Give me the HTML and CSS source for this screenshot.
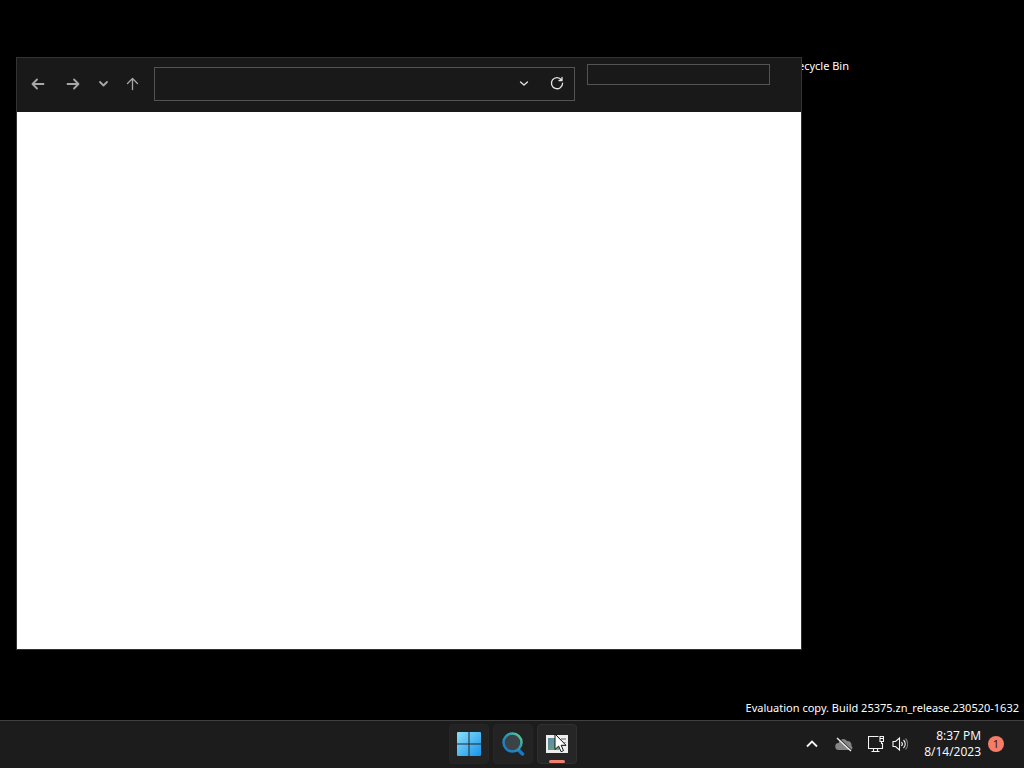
FILE: index.html
```
<!DOCTYPE html>
<html lang="en">
<head>
    <meta charset="UTF-8">
    <meta name="viewport" content="width=device-width, initial-scale=1.0">
    <title>Desktop</title>
    <link rel="stylesheet" href="styles.css">
</head>
<body>
    <main class="desktop">
        <div class="desktop-label">Recycle Bin</div>

        <section class="window">
            <header class="toolbar">
                <nav class="nav">
                    <button class="nav-btn" aria-label="Back">
                        <svg width="16" height="16" viewBox="0 0 16 16"><path d="M13.500 8H2.500M7 3.500L2.500 8 7 12.500"/></svg>
                    </button>
                    <button class="nav-btn" aria-label="Forward">
                        <svg width="16" height="16" viewBox="0 0 16 16"><path d="M2.500 8h11M9 3.500L13.500 8 9 12.500"/></svg>
                    </button>
                    <button class="nav-btn recent" aria-label="Recent locations">
                        <svg width="16" height="16" viewBox="0 0 16 16"><path d="M4 6l3.500 3.500L11 6"/></svg>
                    </button>
                    <button class="nav-btn up" aria-label="Up">
                        <svg width="16" height="16" viewBox="0 0 16 16"><path d="M7.500 13.500V2.500M2.500 7.500l5-5 5 5"/></svg>
                    </button>
                </nav>
                <div class="address">
                    <input type="text" class="address-input" aria-label="Address">
                    <button class="address-btn" aria-label="Previous locations">
                        <svg width="16" height="16" viewBox="0 0 16 16"><path d="M4.500 6L8 9l3.500-3"/></svg>
                    </button>
                    <button class="address-btn refresh" aria-label="Refresh">
                        <svg width="16" height="16" viewBox="0 0 16 16"><path d="M12.500 3.800A5.600 5.600 0 1 0 13.600 7.200M13 1.500v3H10"/></svg>
                    </button>
                </div>
                <input type="text" class="search" aria-label="Search">
            </header>
            <div class="content"></div>
        </section>

        <div class="watermark">Evaluation copy. Build 25375.zn_release.230520-1632</div>
    </main>

    <footer class="taskbar">
        <div class="apps">
            <button class="app" aria-label="Start">
                <svg width="24" height="24" viewBox="0 0 24 24">
                    <defs>
                        <linearGradient id="win" gradientUnits="userSpaceOnUse" x1="0" y1="0" x2="24" y2="24">
                            <stop offset="0" stop-color="#8be0fb"/>
                            <stop offset="1" stop-color="#1593ea"/>
                        </linearGradient>
                    </defs>
                    <path fill="url(#win)" d="M0 1a1 1 0 0 1 1-1h10.500v11.500H0zM12.500 0H23a1 1 0 0 1 1 1v10.500H12.500zM0 12.500h11.500V24H1a1 1 0 0 1-1-1zM12.500 12.500H24V23a1 1 0 0 1-1 1H12.500z"/>
                </svg>
            </button>
            <button class="app" aria-label="Search">
                <svg width="24" height="24" viewBox="0 0 24 24" fill="none">
                    <defs>
                        <linearGradient id="lens" x1="1" y1="0" x2="0" y2="1">
                            <stop offset="0" stop-color="#62d68c"/>
                            <stop offset="0.400" stop-color="#2f9bb0"/>
                            <stop offset="1" stop-color="#1473cc"/>
                        </linearGradient>
                    </defs>
                    <path d="M17.500 18l4 4" stroke="#1678cc" stroke-width="3.500" stroke-linecap="round"/>
                    <circle cx="11.500" cy="10.500" r="9" fill="#3b4346" stroke="url(#lens)" stroke-width="2.500"/>
                </svg>
            </button>
            <button class="app active" aria-label="Explorer window">
                <svg width="22" height="18" viewBox="0 0 22 18">
                    <defs>
                        <linearGradient id="pane" x1="0" y1="0" x2="1" y2="1">
                            <stop offset="0" stop-color="#5d86a0"/>
                            <stop offset="1" stop-color="#68a981"/>
                        </linearGradient>
                    </defs>
                    <path fill="#eeeeee" d="M0 0h22v18H0z"/>
                    <path fill="url(#pane)" d="M2 3h11v12H2z"/>
                    <path fill="#a4a4a4" d="M15 3h5v2h-5zM15 7h5v1h-5zM15 10h5v1h-5z"/>
                </svg>
                <!-- mouse pointer -->
                <svg class="cursor" width="13" height="20" viewBox="0 0 13 20">
                    <path d="M1 1v15.500l3.600-3.400 2.500 5.600 2.400-1.100-2.400-5.300H12z" fill="#ffffff" stroke="#111111"/>
                </svg>
            </button>
        </div>

        <div class="tray">
            <button class="tray-btn" aria-label="Show hidden icons">
                <svg width="16" height="16" viewBox="0 0 16 16"><path d="M3 10.500l5-5 5 5" stroke-width="1.800"/></svg>
            </button>
            <button class="tray-btn" aria-label="OneDrive">
                <svg width="18" height="16" viewBox="0 0 18 16">
                    <path d="M4 14a3.500 3.500 0 0 1-.5-7A4.800 4.800 0 0 1 12 5a4.200 4.200 0 0 1 4.500 5 2.200 2.200 0 0 1-1 4z" fill="#858585" stroke="none"/>
                    <path d="M2.600 1.400l14 13" stroke="#1c1c1c" stroke-width="1.200"/>
                    <path d="M2 2l14 13" stroke="#eeeeee" stroke-width="1.400"/>
                </svg>
            </button>
            <button class="tray-btn status" aria-label="Network and volume">
                <svg width="16" height="16" viewBox="0 0 16 16">
                    <path d="M10.500 .5H.5v12h14V7M5.500 12.500v3M9.500 12.500v3M3.500 15.500h8M12 .5h3.500v5H12zM12 2.500h3.500M13.500 5.500V8"/>
                </svg>
                <svg width="16" height="16" viewBox="0 0 16 16">
                    <path d="M1 5.500h2.500L7.500 2v12l-4-3.500H1z"/>
                    <path d="M9.500 6a3 3 0 0 1 0 4M11.500 4a5.500 5.500 0 0 1 0 8"/>
                    <path d="M13.500 2.500a8 8 0 0 1 0 11" stroke="#777777"/>
                </svg>
            </button>
            <button class="tray-btn clock">
                <span>8:37 PM</span>
                <span>8/14/2023</span>
            </button>
            <button class="badge" aria-label="1 notification">1</button>
        </div>
    </footer>
</body>
</html>
```
FILE: styles.css
```
* {
    box-sizing: border-box;
}

body {
    margin: 0;
    height: 100vh;
    display: flex;
    flex-direction: column;
    overflow: hidden;
    background: #000000;
    color: #ffffff;
    font-family: "Noto Sans", "Open Sans", sans-serif;
    font-size: 11px;
    line-height: 16px;
}

button,
input {
    margin: 0;
    padding: 0;
    border: none;
    background: transparent;
    color: inherit;
    font: inherit;
}

button {
    display: flex;
    align-items: center;
    justify-content: center;
}

svg {
    display: block;
}

/* Desktop */
.desktop {
    flex: 1;
    position: relative;
    display: flex;
    flex-direction: column;
    justify-content: flex-end;
}

.desktop-label {
    position: absolute;
    top: 58px;
    right: 175px;
}

.window {
    position: absolute;
    top: 57px;
    right: 222px;
    bottom: 70px;
    left: 16px;
    display: flex;
    flex-direction: column;
    border: 1px solid #333333;
}

.watermark {
    padding: 0 5px 4px;
    text-align: right;
}

/* Window toolbar */
.toolbar {
    display: flex;
    align-items: flex-start;
    height: 54px;
    padding: 6px 31px 0 5px;
    background: #191919;
}

.nav {
    display: flex;
    gap: 3px;
    margin: 3px 7px 0 0;
}

.nav-btn {
    width: 32px;
    height: 34px;
}

.nav-btn.recent {
    width: 24px;
}

.nav-btn.up {
    width: 28px;
}

.nav-btn svg,
.address-btn svg {
    fill: none;
    stroke: #a8a8a8;
    stroke-width: 1.8;
    stroke-linecap: round;
    stroke-linejoin: round;
}

.nav-btn.up svg {
    stroke-width: 1.3;
}

.address {
    flex: 1;
    display: flex;
    height: 34px;
    margin: 3px 12px 0 0;
    border: 1px solid #535353;
}

.address-input {
    flex: 1;
    min-width: 0;
    padding: 0 8px;
}

.address-btn {
    width: 32px;
}

.address-btn.refresh {
    width: 34px;
}

.address-btn svg {
    stroke: #e4e4e4;
    stroke-width: 1.3;
}

.search {
    width: 183px;
    height: 21px;
    padding: 0 4px;
    border: 1px solid #535353;
}

.content {
    flex: 1;
    background: #ffffff;
}

/* Taskbar */
.taskbar {
    display: grid;
    grid-template-columns: 1fr auto 1fr;
    align-items: center;
    height: 48px;
    padding-bottom: 1px;
    border-top: 1px solid #404040;
    background: #1c1c1c;
}

.apps {
    grid-column: 2;
    display: flex;
    gap: 4px;
    padding-left: 1px;
}

.app {
    position: relative;
    width: 40px;
    height: 40px;
    border: 1px solid #262626;
    border-radius: 4px;
    background: #232323;
}

.app.active {
    border-color: #303030;
    background: #262626;
}

.app.active::after {
    content: "";
    position: absolute;
    bottom: 0;
    left: 11px;
    width: 16px;
    height: 3px;
    border-radius: 2px;
    background: #f08070;
}

.cursor {
    position: absolute;
    top: 8px;
    left: 16px;
}

.tray {
    display: flex;
    align-items: center;
    justify-content: flex-end;
    padding-right: 20px;
}

.tray-btn {
    width: 32px;
    height: 40px;
}

.tray-btn svg {
    fill: none;
    stroke: #f4f4f4;
    stroke-width: 1.1;
}

.tray-btn.status {
    width: 56px;
    gap: 8px;
}

.tray-btn.clock {
    width: auto;
    flex-direction: column;
    align-items: flex-end;
    margin: 0 7px 0 8px;
    font-family: "Open Sans", "Noto Sans", sans-serif;
    font-size: 12px;
}

.badge {
    width: 16px;
    height: 16px;
    border-radius: 50%;
    background: #f57c67;
    color: #3a1510;
}
```
